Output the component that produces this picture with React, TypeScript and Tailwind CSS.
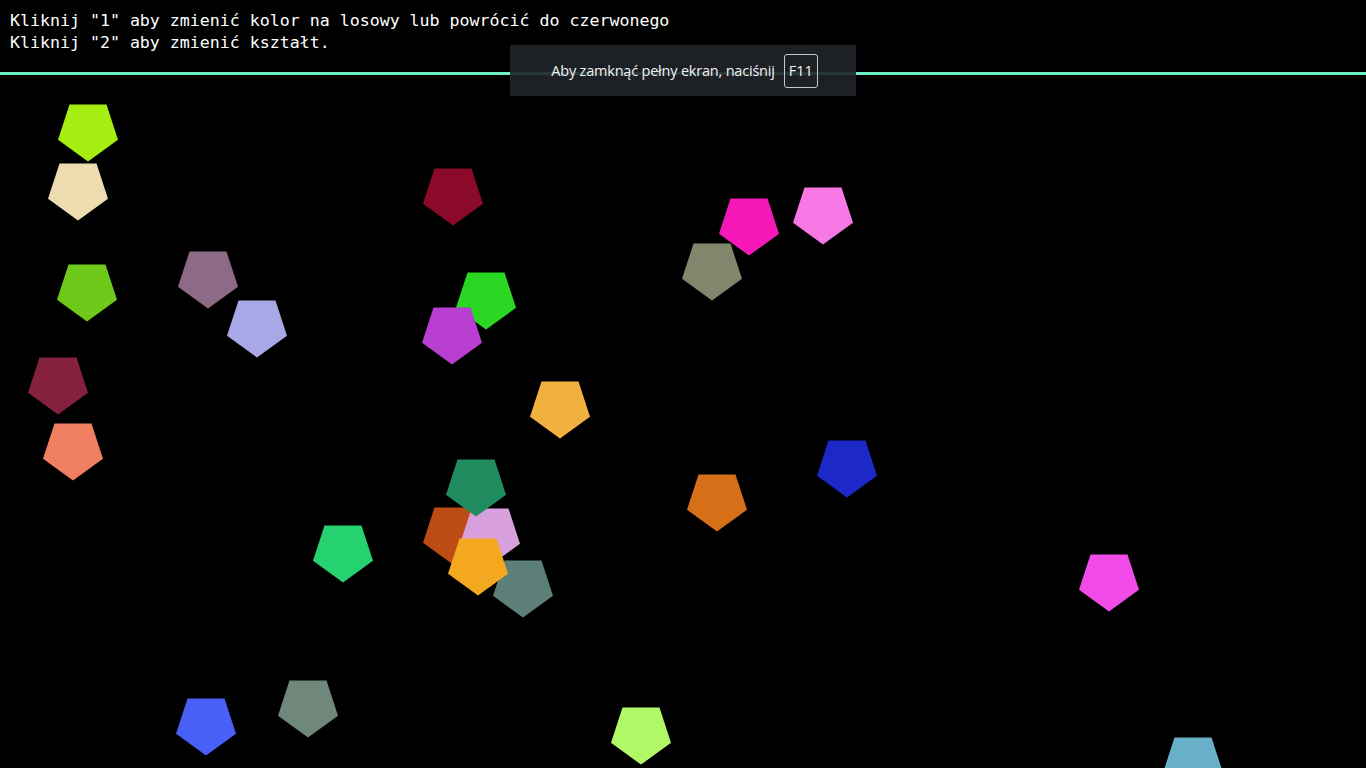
const shapes = [
  { x: 88, y: 130, c: "#a6ee12" },
  { x: 78, y: 189, c: "#ecdcb0" },
  { x: 87, y: 290, c: "#6fc91a" },
  { x: 58, y: 383, c: "#85213f" },
  { x: 73, y: 449, c: "#f07f62" },
  { x: 208, y: 277, c: "#8d6b88" },
  { x: 257, y: 326, c: "#a8a8e6" },
  { x: 453, y: 194, c: "#8b0a2a" },
  { x: 486, y: 298, c: "#2ad824" },
  { x: 452, y: 333, c: "#b83fd0" },
  { x: 560, y: 407, c: "#f2b03e" },
  { x: 749, y: 224, c: "#f618b8" },
  { x: 823, y: 213, c: "#f878e6" },
  { x: 712, y: 269, c: "#81876c" },
  { x: 847, y: 466, c: "#1c28c8" },
  { x: 717, y: 500, c: "#d66f18" },
  { x: 453, y: 533, c: "#bc4c14" },
  { x: 490, y: 534, c: "#d8a0dc" },
  { x: 523, y: 586, c: "#5c8078" },
  { x: 476, y: 485, c: "#208c60" },
  { x: 478, y: 564, c: "#f4a820" },
  { x: 343, y: 551, c: "#26d270" },
  { x: 1109, y: 580, c: "#f24ce8" },
  { x: 206, y: 724, c: "#4860f8" },
  { x: 308, y: 706, c: "#70887c" },
  { x: 641, y: 733, c: "#b0f866" },
  { x: 1193, y: 763, c: "#68b0c8" },
];

const Pentagon = ({ x, y, c }: { x: number; y: number; c: string }) => (
  <svg
    className="absolute"
    style={{ left: x - 31, top: y - 26 }}
    width={62}
    height={59}
    viewBox="-31 -26 62 59"
  >
    <polygon points="0,31.6 -30,9.8 -18.5,-25.5 18.5,-25.5 30,9.8" fill={c} />
  </svg>
);

const App = () => {
  return (
    <div className="relative h-[768px] w-full overflow-hidden bg-black">
      <div className="px-[10px] pt-[10px] font-['DejaVu_Sans_Mono',monospace] text-[16.6px] leading-[22px] text-white">
        <div>Kliknij "1" aby zmienić kolor na losowy lub powrócić do czerwonego</div>
        <div>Kliknij "2" aby zmienić kształt.</div>
      </div>
      <div className="mt-[18px] h-[3px] w-full bg-[#6ef2c8]" />

      {shapes.map((s, i) => (
        <Pentagon key={i} {...s} />
      ))}

      {/* fullscreen notice */}
      <div className="absolute left-[510px] top-[45px] flex h-[51px] w-[346px] items-center justify-center gap-[9px] bg-[#202428]/90 pl-[3px] font-['Open_Sans',sans-serif] text-[14.5px] text-[#f2f2f2]">
        <span className="tracking-[-0.2px]">Aby zamknąć pełny ekran, naciśnij</span>
        <span className="flex h-[34px] w-[34px] items-center justify-center rounded-[3px] border border-[#c8c8c8] text-[14.5px]">
          F11
        </span>
      </div>
    </div>
  );
};

export default App;
